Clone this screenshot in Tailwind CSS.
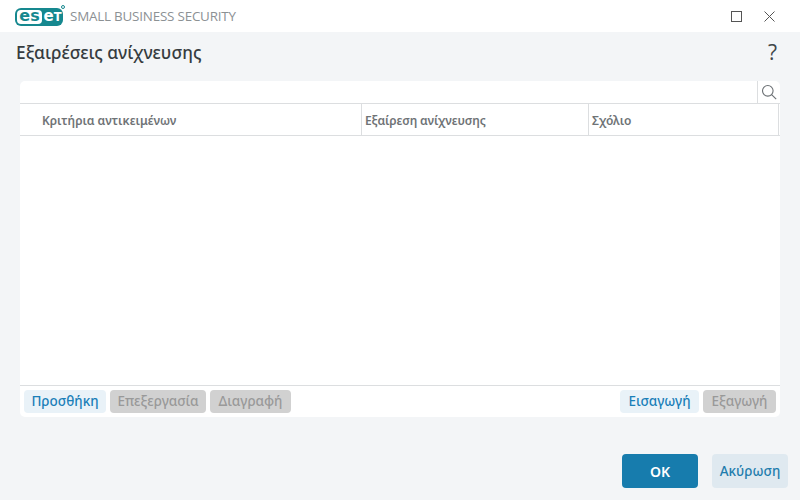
<!DOCTYPE html>
<html lang="en">
<head>
    <meta charset="UTF-8">
    <title>ESET Small Business Security</title>
    <script src="https://cdn.jsdelivr.net/npm/@tailwindcss/browser@4"></script>
</head>
<body class="w-[800px] h-[500px] overflow-hidden bg-[#f3f5f7] font-['Noto_Sans','Open_Sans',sans-serif] flex flex-col">
    <!-- title bar -->
    <div class="h-8 bg-white flex items-center shrink-0">
        <div class="ml-[15px] w-[49px] h-[20px] relative flex items-center">
            <div class="w-[48px] h-[18px] mt-[2px] rounded-[6px] bg-[#16888f] flex items-center">
                <span class="w-[25px] h-[14px] ml-[2px] rounded-[4px] bg-white text-[#16888f] text-[16px] leading-[14px] font-bold font-['DejaVu_Sans',sans-serif] flex items-center justify-center pb-[2px]">es</span>
                <span class="flex-1 text-white text-[15px] leading-[14px] font-bold font-['DejaVu_Sans',sans-serif] text-center pb-[2px]">e<span class="text-[11.5px]">T</span></span>
            </div>
            <div class="absolute right-[-1px] top-[-1px] w-[4px] h-[4px] rounded-full border border-[#16888f]"></div>
        </div>
        <span class="ml-[6px] text-[13.4px] tracking-[-0.2px] text-[#8c9194] font-['Open_Sans',sans-serif]">SMALL BUSINESS SECURITY</span>
        <div class="ml-auto flex items-center">
            <div class="w-[11px] h-[11px] border border-[#555] mr-[22px]"></div>
            <svg class="w-[11px] h-[11px] mr-[25px]" viewBox="0 0 11 11" fill="none" stroke="#555" stroke-width="1"><path d="M.5.5l10 10M10.5.5l-10 10"/></svg>
        </div>
    </div>

    <!-- heading -->
    <div class="h-[49px] shrink-0 flex items-start justify-between pl-4 pr-[23px]">
        <h1 class="text-[17.3px] leading-[24px] mt-[9px] text-[#363c40] font-medium">Εξαιρέσεις ανίχνευσης</h1>
        <span class="text-[21px] leading-[28px] mt-[6px] text-[#3f464a] font-['Open_Sans',sans-serif]">?</span>
    </div>

    <!-- table card -->
    <div class="mx-5 h-[336px] bg-white rounded-[5px] flex flex-col shrink-0">
        <div class="h-[22px] flex justify-end shrink-0">
            <div class="w-[23px] border-l border-[#dcdee0] flex items-center justify-center">
                <svg class="w-[16px] h-[16px]" viewBox="0 0 16 16" fill="none" stroke="#6b7074" stroke-width="1.1"><circle cx="6.8" cy="6.8" r="5.3"/><path d="M10.6 10.6l4.6 4.6"/></svg>
            </div>
        </div>
        <div class="h-[33px] border-y border-[#dcdee0] flex text-[12px] font-semibold text-[#6f7376] shrink-0">
            <div class="w-[342px] pl-[22px] pt-[2px] border-r border-[#dcdee0] flex items-center">Κριτήρια αντικειμένων</div>
            <div class="w-[227px] pl-[3px] pt-[2px] border-r border-[#dcdee0] flex items-center tracking-[-0.15px]">Εξαίρεση ανίχνευσης</div>
            <div class="w-[190px] pl-[3px] pt-[2px] border-r border-[#dcdee0] flex items-center">Σχόλιο</div>
        </div>
        <div class="flex-1"></div>
        <div class="h-[32px] border-t border-[#dcdee0] flex items-center justify-between px-1 shrink-0 text-[13.5px] font-medium">
            <div class="flex gap-1">
                <button class="w-[82px] h-[23px] rounded-[4px] bg-[#e9f2f8] text-[#1a7fb8]">Προσθήκη</button>
                <button class="w-[96px] h-[23px] rounded-[4px] bg-[#d1d1d1] text-[#999999]">Επεξεργασία</button>
                <button class="w-[81px] h-[23px] rounded-[4px] bg-[#d1d1d1] text-[#999999]">Διαγραφή</button>
            </div>
            <div class="flex gap-1">
                <button class="w-[79px] h-[23px] rounded-[4px] bg-[#e9f2f8] text-[#1a7fb8]">Εισαγωγή</button>
                <button class="w-[73px] h-[23px] rounded-[4px] bg-[#d1d1d1] text-[#999999]">Εξαγωγή</button>
            </div>
        </div>
    </div>

    <!-- dialog buttons -->
    <div class="flex justify-end gap-[14px] pr-3 pt-[37px] text-[13.5px] font-medium">
        <button class="w-[76px] h-[34px] rounded-[4px] bg-[#177cad] text-white font-semibold text-[14px]">OK</button>
        <button class="w-[76px] h-[34px] rounded-[4px] bg-[#dfe9f0] text-[#1f7dad]">Ακύρωση</button>
    </div>
</body>
</html>
